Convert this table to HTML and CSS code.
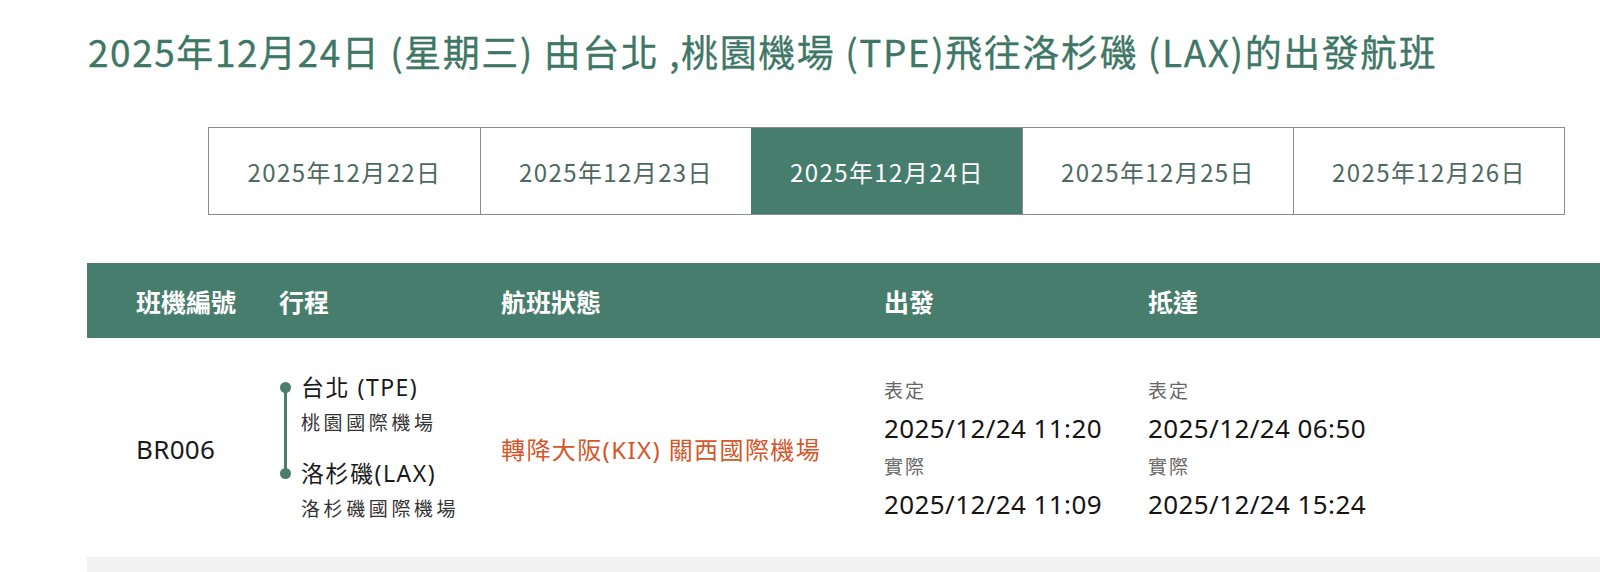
FILE: index.html
```html
<!DOCTYPE html>
<html lang="zh-Hant">
<head>
<meta charset="utf-8">
<title>航班</title>
<link rel="stylesheet" href="styles.css">
</head>
<body>
<div class="page">
  <h1 class="title">2025年12月24日 (星期三) 由台北 ,桃園機場 (TPE)飛往洛杉磯 (LAX)的出發航班</h1>
  <div class="tabs">
    <div class="tab">2025年12月22日</div>
    <div class="tab">2025年12月23日</div>
    <div class="tab active">2025年12月24日</div>
    <div class="tab">2025年12月25日</div>
    <div class="tab">2025年12月26日</div>
  </div>
  <div class="table">
    <div class="thead">
      <div class="th">班機編號</div>
      <div class="th">行程</div>
      <div class="th">航班狀態</div>
      <div class="th">出發</div>
      <div class="th">抵達</div>
    </div>
    <div class="trow">
      <div class="td flight">BR006</div>
      <div class="td route">
        <div class="rail"><span class="dot"></span><span class="line"></span><span class="dot"></span></div>
        <div class="stops">
          <div class="stop">
            <div class="city">台北 (TPE)</div>
            <div class="airport">桃園國際機場</div>
          </div>
          <div class="stop">
            <div class="city">洛杉磯(LAX)</div>
            <div class="airport">洛杉磯國際機場</div>
          </div>
        </div>
      </div>
      <div class="td status">轉降大阪(KIX) 關西國際機場</div>
      <div class="td times">
        <div class="lbl">表定</div>
        <div class="time">2025/12/24 11:20</div>
        <div class="lbl">實際</div>
        <div class="time">2025/12/24 11:09</div>
      </div>
      <div class="td times">
        <div class="lbl">表定</div>
        <div class="time">2025/12/24 06:50</div>
        <div class="lbl">實際</div>
        <div class="time">2025/12/24 15:24</div>
      </div>
    </div>
    <div class="tfoot"></div>
  </div>
</div>
</body>
</html>
```
FILE: styles.css
```css
html, body {
  margin: 0;
  padding: 0;
  background: #ffffff;
}
body {
  font-family: "Noto Sans", "Noto Sans CJK TC", sans-serif;
  color: #222;
  overflow: hidden;
}
.page {
  width: 1600px;
  height: 572px;
  overflow: hidden;
}
.title {
  margin: 0;
  padding: 27px 0 0 88px;
  height: 100px;
  box-sizing: border-box;
  font-family: "Noto Sans CJK TC", sans-serif;
  font-weight: 400;
  font-size: 37px;
  line-height: 48px;
  letter-spacing: 1.55px;
  color: #3f7766;
  white-space: nowrap;
  -webkit-text-stroke: 0.3px #3f7766;
}
.tabs {
  margin: 27px 0 0 208px;
  width: 1357px;
  height: 88px;
  display: grid;
  grid-template-columns: repeat(5, 1fr);
  border: 1px solid #8c8c8c;
  box-sizing: border-box;
}
.tab {
  display: flex;
  align-items: center;
  justify-content: center;
  font-family: "Noto Sans CJK TC", sans-serif;
  font-size: 24px;
  letter-spacing: 1.4px;
  color: #4d6a62;
  border-left: 1px solid #8c8c8c;
}
.tab:first-child { border-left: none; }
.tab.active {
  background: #477d6c;
  color: #ffffff;
  border-left-color: #477d6c;
}
.table {
  margin: 48px 0 0 87px;
}
.thead, .trow {
  display: grid;
  grid-template-columns: 143px 222px 383px 264px 1fr;
  padding-left: 49px;
}
.thead {
  height: 75px;
  align-items: center;
  background: #477d6c;
}
.th {
  font-family: "Noto Sans CJK TC", sans-serif;
  font-weight: 700;
  font-size: 25px;
  color: #ffffff;
}
.trow {
  height: 219px;
  align-items: center;
}
.flight {
  font-size: 26px;
  letter-spacing: 0.3px;
  color: #1a1a1a;
  padding-top: 2px;
}
.route {
  display: flex;
  gap: 10px;
  padding-top: 1px;
}
.rail {
  display: flex;
  flex-direction: column;
  align-items: center;
  width: 12px;
  padding-top: 12px;
}
.dot {
  width: 11px;
  height: 11px;
  border-radius: 50%;
  background: #4a7d6d;
  flex: none;
}
.line {
  width: 3px;
  height: 77px;
  background: #4a7d6d;
  margin: -1px 0;
  flex: none;
}
.stops {
  display: flex;
  flex-direction: column;
  gap: 16px;
}
.city {
  font-family: "Noto Sans", "Noto Sans CJK TC", sans-serif;
  font-size: 23px;
  line-height: 34px;
  letter-spacing: 1.5px;
  color: #1a1a1a;
}
.airport {
  font-family: "Noto Sans CJK TC", sans-serif;
  font-size: 19px;
  line-height: 36px;
  letter-spacing: 3.6px;
  color: #333;
}
.status {
  font-family: "Noto Sans", "Noto Sans CJK TC", sans-serif;
  font-size: 24px;
  letter-spacing: 1.4px;
  color: #d4562a;
  padding-top: 2px;
}
.times {
  display: flex;
  flex-direction: column;
}
.lbl {
  font-family: "Noto Sans CJK TC", sans-serif;
  font-size: 19px;
  line-height: 36px;
  letter-spacing: 2px;
  color: #666;
}
.time {
  font-size: 26px;
  line-height: 40px;
  letter-spacing: 0.4px;
  color: #141414;
}
.tfoot {
  height: 40px;
  background: #f2f2f2;
}
```
